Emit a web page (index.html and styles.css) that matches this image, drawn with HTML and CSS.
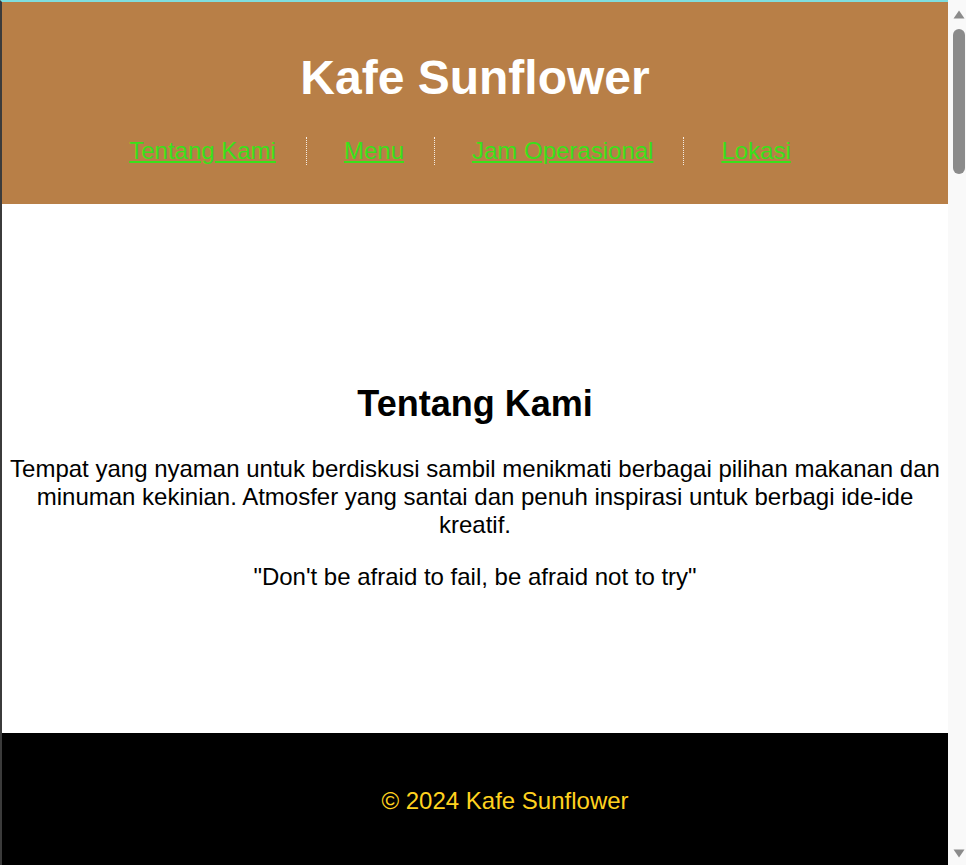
FILE: index.html
```html
<!DOCTYPE html>
<html lang="id">
<head>
<meta charset="utf-8">
<title>Kafe Sunflower</title>
<link rel="stylesheet" href="styles.css">
</head>
<body>
<div class="window">
  <div class="viewport">
    <header class="site-header">
      <h1 class="title">Kafe Sunflower</h1>
      <nav>
        <ul class="nav">
          <li class="nav-item"><a href="#tentang">Tentang Kami</a></li>
          <li class="nav-item"><a href="#menu">Menu</a></li>
          <li class="nav-item"><a href="#jam">Jam Operasional</a></li>
          <li class="nav-item"><a href="#lokasi">Lokasi</a></li>
        </ul>
      </nav>
    </header>
    <section class="about" id="tentang">
      <h2 class="about-title">Tentang Kami</h2>
      <p class="about-text">Tempat yang nyaman untuk berdiskusi sambil menikmati berbagai pilihan makanan dan minuman kekinian. Atmosfer yang santai dan penuh inspirasi untuk berbagi ide-ide kreatif.</p>
      <p class="about-quote">"Don't be afraid to fail, be afraid not to try"</p>
    </section>
    <footer class="site-footer">
      <p class="copyright">© 2024 Kafe Sunflower</p>
    </footer>
  </div>
  <div class="scrollbar" aria-hidden="true">
    <svg class="arrow arrow-up" width="12" height="9" viewBox="0 0 12 9"><polygon points="6,0.5 11.5,8.5 0.5,8.5" fill="#8b8b8b"/></svg>
    <div class="thumb"></div>
    <div class="track-rest"></div>
    <svg class="arrow arrow-down" width="12" height="9" viewBox="0 0 12 9"><polygon points="0.5,0.5 11.5,0.5 6,8.5" fill="#8b8b8b"/></svg>
  </div>
</div>
</body>
</html>
```

FILE: styles.css
```css
* {
  box-sizing: border-box;
}

html, body {
  margin: 0;
  padding: 0;
  height: 865px;
  overflow: hidden;
}

body {
  font-family: "Liberation Sans", Arial, sans-serif;
  font-size: 24px;
  color: #000;
  background: #fff;
}

.window {
  display: flex;
  height: 865px;
  overflow: hidden;
}

.viewport {
  flex: 1;
  min-width: 0;
  height: 865px;
  overflow: hidden;
  border-top: 2px solid #7fdede;
  border-left: 2px solid #3b3b3b;
  background: #fff;
}

.site-header {
  background: #b87f47;
  padding: 16px 0 15px;
  text-align: center;
}

.title {
  margin: 32px 0;
  font-size: 48px;
  font-weight: bold;
  color: #fff;
  line-height: normal;
}

.nav {
  display: flex;
  justify-content: center;
  gap: 7px;
  list-style: none;
  margin: 24px 0;
  padding: 0 30px 0 0;
}

.nav-item {
  padding: 0 30px;
  border-right: 1px dotted rgba(255, 255, 255, 0.85);
}

.nav-item:last-child {
  border-right: none;
}

.nav-item a {
  color: #3ae01a;
  text-decoration: underline;
}

.about {
  padding: 149px 8px 118px;
  text-align: center;
}

.about-title {
  margin: 30px 0;
  font-size: 36px;
  font-weight: bold;
}

.about-text,
.about-quote {
  margin: 24px 0;
}

.site-footer {
  background: #000;
  padding: 30px 0 30px 60px;
  text-align: center;
}

.copyright {
  margin: 24px 0;
  color: #ffd21f;
}

.scrollbar {
  width: 18px;
  height: 865px;
  background: #f9f9f9;
  display: flex;
  flex-direction: column;
  align-items: flex-start;
  padding-left: 5px;
}

.arrow {
  display: block;
  flex: none;
}

.arrow-up {
  margin-top: 10px;
}

.thumb {
  width: 12px;
  height: 145px;
  margin-top: 10px;
  border-radius: 6px;
  background: #8b8b8b;
  flex: none;
}

.track-rest {
  flex: 1;
}

.arrow-down {
  margin-bottom: 7px;
}
```
